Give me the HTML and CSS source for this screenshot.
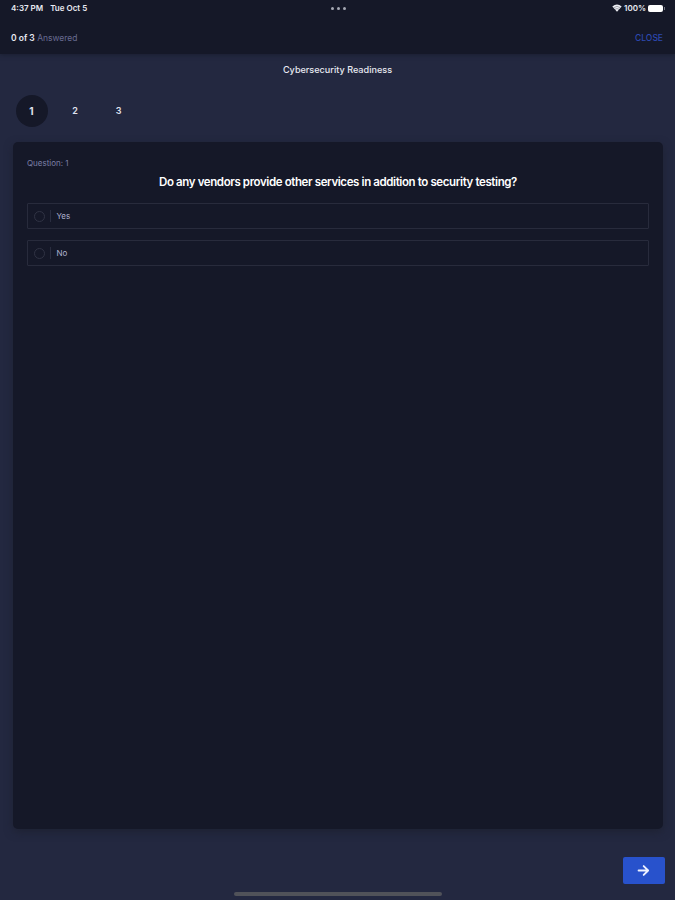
FILE: index.html
```html
<!DOCTYPE html>
<html lang="en">
<head>
    <meta charset="UTF-8">
    <meta name="viewport" content="width=device-width, initial-scale=1.0">
    <title>Cybersecurity Readiness</title>
    <link rel="stylesheet" href="styles.css">
</head>
<body>

    <header class="header">
        <div class="status-bar">
            <div class="status-left">
                <span class="time">4:37 PM</span>
                <span class="date">Tue Oct 5</span>
            </div>
            <div class="dots"><i></i><i></i><i></i></div>
            <div class="status-right">
                <svg class="wifi" viewBox="0 0 10 8">
                    <path d="M0.3 2.6 Q5 -1.7 9.7 2.6 L5 7.7 Z" fill="#eceef4"/>
                    <path d="M1.5 3.8 Q5 0.9 8.5 3.8 M3 5.3 Q5 3.8 7 5.3" fill="none" stroke="#151827" stroke-width="0.35"/>
                </svg>
                <span class="percent">100%</span>
                <span class="battery"></span>
                <span class="battery-tip"></span>
            </div>
        </div>
        <div class="nav-bar">
            <div class="progress"><b>0 of 3</b> <span>Answered</span></div>
            <a class="close" href="#close">CLOSE</a>
        </div>
    </header>

    <main class="content">
        <h1 class="title">Cybersecurity Readiness</h1>

        <div class="steps">
            <a class="step active" href="#1">1</a>
            <a class="step" href="#2">2</a>
            <a class="step" href="#3">3</a>
        </div>

        <section class="card">
            <div class="question-number">Question: 1</div>
            <h2 class="question">Do any vendors provide other services in addition to security testing?</h2>
            <div class="option">
                <span class="radio"></span>
                <span class="option-label">Yes</span>
            </div>
            <div class="option">
                <span class="radio"></span>
                <span class="option-label">No</span>
            </div>
        </section>
    </main>

    <footer class="footer">
        <button class="next-button" aria-label="Next">
            <svg viewBox="0 0 14 14">
                <path d="M1.7 7 H12 M7.2 2.2 L12 7 L7.2 11.8" fill="none" stroke="#eef2ff" stroke-width="2" stroke-linecap="round" stroke-linejoin="round"/>
            </svg>
        </button>
        <div class="home-indicator"></div>
    </footer>

</body>
</html>
```

FILE: styles.css
```css
* {
    box-sizing: border-box;
}

body {
    font-family: Inter, "Liberation Sans", sans-serif;
    margin: 0;
    height: 900px;
    display: flex;
    flex-direction: column;
    overflow: hidden;
    background-color: #232840;
    color: #e8eaf2;
}

a {
    text-decoration: none;
}

/* Top bar */
.header {
    height: 54px;
    background-color: #151828;
    box-shadow: 0 1px 4px rgba(20, 24, 36, 0.6);
}

.status-bar {
    display: grid;
    grid-template-columns: 1fr auto 1fr;
    align-items: center;
    height: 17px;
    padding: 0 10px 0 11px;
    font-size: 8px;
    line-height: 10px;
    font-weight: 600;
}

.status-left {
    display: flex;
    gap: 7px;
    padding-bottom: 1px;
}

.dots {
    display: flex;
    gap: 3px;
}

.dots i {
    width: 3px;
    height: 3px;
    border-radius: 50%;
    background-color: #a5a8b3;
}

.status-right {
    display: flex;
    justify-content: flex-end;
    align-items: center;
    padding-bottom: 1px;
}

.wifi {
    width: 10px;
    height: 8px;
    margin-right: 2px;
}

.battery {
    width: 15px;
    height: 7px;
    margin-left: 2px;
    border-radius: 2px;
    background-color: #ffffff;
}

.battery-tip {
    width: 1px;
    height: 3px;
    margin-left: 1px;
    background-color: #747784;
}

.nav-bar {
    display: flex;
    justify-content: space-between;
    align-items: center;
    height: 37px;
    padding: 5px 12px 0 11px;
    font-size: 8.5px;
}

.progress b {
    font-weight: 600;
}

.progress span {
    color: #686b91;
}

.close {
    color: #2d49b0;
    font-size: 8.5px;
    font-weight: 500;
}

/* Questionnaire */
.title {
    margin: 9px 0 0;
    line-height: 14px;
    text-align: center;
    font-size: 9.1px;
    font-weight: 500;
}

.steps {
    display: flex;
    gap: 11.5px;
    margin: 18px 0 0 15.5px;
}

.step {
    width: 32px;
    height: 32px;
    line-height: 32px;
    border-radius: 50%;
    text-align: center;
    font-size: 9px;
    font-weight: 600;
    color: #e0e3f0;
}

.step.active {
    background-color: #151828;
    font-size: 10px;
    font-weight: 700;
}

.card {
    height: 687px;
    margin: 15px 12px 0 13px;
    padding: 15px 14px;
    border-radius: 5px;
    background-color: #151828;
    box-shadow: 0 3px 9px rgba(27, 31, 43, 0.65);
}

.question-number {
    line-height: 12px;
    font-size: 8px;
    color: #7c7fa6;
}

.question {
    margin: 5px 0 13px;
    line-height: 16px;
    text-align: center;
    font-size: 11.5px;
    font-weight: 600;
    letter-spacing: -0.39px;
    color: #ffffff;
}

.option {
    display: flex;
    align-items: center;
    height: 26px;
    margin-bottom: 11px;
    padding-left: 6px;
    border: 1px solid #282b3c;
    border-radius: 1px;
}

.radio {
    width: 11px;
    height: 11px;
    border: 1px solid #303344;
    border-radius: 50%;
}

.option-label {
    margin-left: 5px;
    padding-left: 5.5px;
    line-height: 12px;
    border-left: 1px solid #2a2d40;
    font-size: 8px;
    color: #b0b3d0;
}

/* Bottom bar */
.footer {
    display: flex;
    flex-direction: column;
    align-items: center;
    margin-top: 28px;
}

.next-button {
    display: flex;
    align-items: center;
    justify-content: center;
    align-self: flex-end;
    width: 42px;
    height: 27px;
    margin-right: 10px;
    padding: 0 1px 0 0;
    border: none;
    border-radius: 2px;
    background-color: #2852cc;
}

.next-button svg {
    width: 13px;
    height: 13px;
}

.home-indicator {
    width: 208px;
    height: 4px;
    margin-top: 8px;
    border-radius: 2px;
    background-color: #505259;
}
```
